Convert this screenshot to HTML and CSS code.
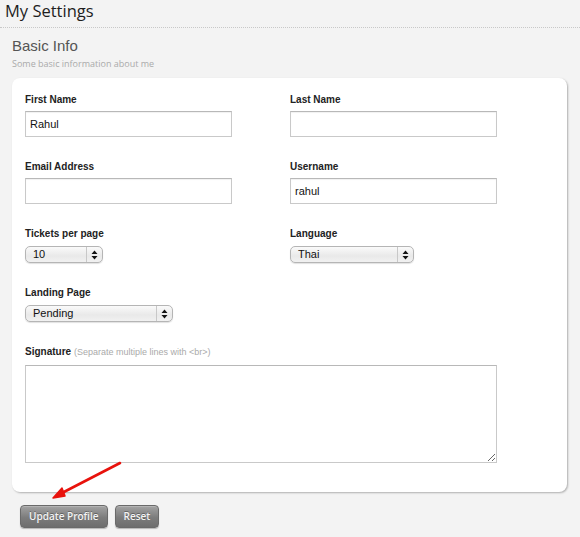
FILE: index.html
```html
<!DOCTYPE html>
<html>
<head>
<meta charset="utf-8">
<link rel="stylesheet" href="styles.css">
</head>
<body>
<header class="page-header"><h1 class="page-title">My Settings</h1></header>
<section class="section">
  <h2 class="section-title">Basic Info</h2>
  <p class="section-sub">Some basic information about me</p>
  <form class="card">
    <div class="grid">
      <div class="field">
        <label class="label">First Name</label>
        <input class="text" type="text" value="Rahul">
      </div>
      <div class="field">
        <label class="label">Last Name</label>
        <input class="text" type="text" value="">
      </div>
      <div class="field">
        <label class="label">Email Address</label>
        <input class="text" type="text" value="">
      </div>
      <div class="field">
        <label class="label">Username</label>
        <input class="text" type="text" value="rahul">
      </div>
      <div class="field">
        <label class="label">Tickets per page</label>
        <span class="select sel-tickets"><span class="sel-val">10</span><span class="sel-arrows"><svg width="7" height="10" viewBox="0 0 7 10"><path d="M3.5 0.5 L6.5 4 L0.5 4 Z M3.5 9.5 L6.5 6 L0.5 6 Z" fill="#111"/></svg></span></span>
      </div>
      <div class="field">
        <label class="label">Language</label>
        <span class="select sel-lang"><span class="sel-val">Thai</span><span class="sel-arrows"><svg width="7" height="10" viewBox="0 0 7 10"><path d="M3.5 0.5 L6.5 4 L0.5 4 Z M3.5 9.5 L6.5 6 L0.5 6 Z" fill="#111"/></svg></span></span>
      </div>
      <div class="field field-last">
        <label class="label">Landing Page</label>
        <span class="select sel-landing"><span class="sel-val">Pending</span><span class="sel-arrows"><svg width="7" height="10" viewBox="0 0 7 10"><path d="M3.5 0.5 L6.5 4 L0.5 4 Z M3.5 9.5 L6.5 6 L0.5 6 Z" fill="#111"/></svg></span></span>
      </div>
      <div class="field field-wide">
        <label class="label">Signature <span class="hint">(Separate multiple lines with &lt;br&gt;)</span></label>
        <textarea class="textarea"></textarea>
      </div>
    </div>
  </form>
  <div class="actions">
    <button class="btn" type="button">Update Profile</button>
    <button class="btn" type="button">Reset</button>
  </div>
</section>
<svg class="annot" width="580" height="537" viewBox="0 0 580 537">
  <line x1="120" y1="463" x2="60" y2="494" stroke="#e8120c" stroke-width="2.6" stroke-linecap="round"/>
  <path d="M53 498 L62 488 L65 496 Z" fill="#e8120c" stroke="#e8120c" stroke-width="1.5" stroke-linejoin="round"/>
</svg>
</body>
</html>
```
FILE: styles.css
```css
html, body {
  margin: 0;
  padding: 0;
}
body {
  background: #f3f3f3;
  font-family: "Liberation Sans", Arial, sans-serif;
  color: #222;
  width: 580px;
  height: 537px;
  overflow: hidden;
  position: relative;
}
.page-header {
  height: 28px;
  box-sizing: border-box;
  border-bottom: 1px dotted #c8c8c8;
  padding-left: 5px;
  padding-top: 0;
}
.page-title {
  margin: 0;
  font-family: "Open Sans", sans-serif;
  font-weight: 400;
  font-size: 16.5px;
  line-height: 21px;
  color: #1e1e1e;
}
.section {
  padding-left: 12px;
}
.section-title {
  margin: 9px 0 0;
  font-size: 15px;
  line-height: 18px;
  font-weight: 400;
  color: #555;
}
.section-sub {
  margin: 3px 0 0;
  font-family: "Open Sans", sans-serif;
  font-size: 9px;
  line-height: 12px;
  color: #aaa;
}
.card {
  margin: 8px 0 0;
  width: 555px;
  box-sizing: border-box;
  background: #fff;
  border-radius: 8px;
  box-shadow: 1px 1px 2px rgba(0,0,0,0.28);
  padding: 15px 13px 29px;
}
.grid {
  display: grid;
  grid-template-columns: 265px 265px;
}
.field {
  display: flex;
  flex-direction: column;
  align-items: flex-start;
  margin-bottom: 23px;
}
.field-last {
  grid-column: 1 / 3;
  margin-bottom: 23px;
}
.field-wide {
  grid-column: 1 / 3;
  margin-bottom: 0;
}
.label {
  font-size: 10px;
  line-height: 13px;
  font-weight: 700;
  color: #222;
  margin-bottom: 5px;
}
.hint {
  font-weight: 400;
  color: #aaa;
  font-size: 9px;
}
.text {
  width: 207px;
  height: 26px;
  box-sizing: border-box;
  border: 1px solid #c9c9c9;
  border-top-color: #b8b8b8;
  box-shadow: inset 0 1px 1px rgba(0,0,0,0.06);
  padding: 0 4px;
  font-family: "Liberation Sans", Arial, sans-serif;
  font-size: 11px;
  color: #111;
  background: #fff;
  outline: none;
  margin: 0;
}
.select {
  display: flex;
  align-items: stretch;
  height: 17px;
  box-sizing: border-box;
  border: 1px solid #b5b5b5;
  border-radius: 5px;
  background: linear-gradient(#fafafa, #e9e9e9 60%, #f1f1f1);
  box-shadow: 0 1px 1px rgba(0,0,0,0.12);
  margin-top: 1px;
}
.sel-tickets { width: 78px; }
.sel-lang { width: 124px; }
.sel-landing { width: 148px; }
.sel-val {
  flex: 1;
  font-size: 11px;
  line-height: 15px;
  padding-left: 7px;
  color: #111;
}
.sel-arrows {
  width: 15px;
  border-left: 1px solid #c8c8c8;
  display: flex;
  align-items: center;
  justify-content: center;
}
.sel-arrows svg { display: block; }
.textarea {
  width: 472px;
  height: 98px;
  box-sizing: border-box;
  border: 1px solid #c9c9c9;
  border-top-color: #b8b8b8;
  margin: 1px 0 0;
  padding: 3px;
  background: #fff;
  outline: none;
  resize: both;
  font-family: "Liberation Sans", Arial, sans-serif;
}
.actions {
  display: flex;
  gap: 7px;
  margin-top: 13px;
  padding-left: 8px;
}
.btn {
  height: 23px;
  padding: 0 8px;
  border: 1px solid #6a6a6a;
  border-radius: 4px;
  background: linear-gradient(#a3a3a3, #7c7c7c 55%, #6e6e6e);
  box-shadow: 0 1px 1px rgba(0,0,0,0.25), inset 0 1px 0 rgba(255,255,255,0.2);
  color: #f4f4f4;
  font-family: "Open Sans", sans-serif;
  font-weight: 600;
  font-size: 10px;
  line-height: 21px;
  text-shadow: 0 -1px 0 rgba(0,0,0,0.3);
  margin: 0;
}
.annot {
  position: absolute;
  left: 0;
  top: 0;
  pointer-events: none;
}
```
